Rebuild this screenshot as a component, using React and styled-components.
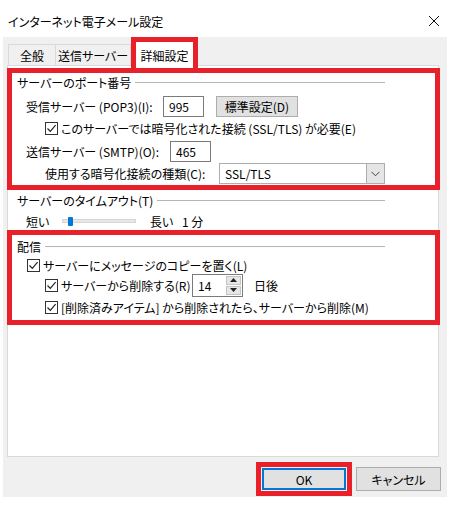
import styled, { createGlobalStyle } from "styled-components";

const GlobalStyle = createGlobalStyle`
  html, body {
    margin: 0;
    padding: 0;
    background: #ffffff;
  }
  body {
    font-family: "Noto Sans CJK JP", "Noto Sans", sans-serif;
    font-size: 12px;
    color: #000;
    font-feature-settings: "palt";
  }
  * {
    box-sizing: border-box;
  }
`;

const RED = "#e8202a";

const Window = styled.div`
  width: 458px;
  height: 506px;
  background: #fff;
  display: flex;
  flex-direction: column;
`;

const TitleBar = styled.div`
  height: 37px;
  padding: 5px 18px 0 8px;
  display: flex;
  align-items: center;
  justify-content: space-between;
  font-size: 12px;
`;

const CloseBtn = styled.div`
  width: 12px;
  height: 12px;
  display: flex;
  svg {
    display: block;
  }
`;

const Surface = styled.div`
  margin: 0 11px 0 3px;
  height: 460px;
  background: #f0f0f0;
  display: flex;
  flex-direction: column;
`;

const TabStrip = styled.div`
  height: 28px;
  padding-left: 5px;
  display: flex;
  align-items: flex-end;
`;

const Tab = styled.div`
  width: ${(p) => p.$w}px;
  height: 21px;
  border: 1px solid #d9d9d9;
  border-bottom: none;
  margin-right: -1px;
  background: #f0f0f0;
  display: flex;
  align-items: center;
  justify-content: center;
  white-space: nowrap;
`;

const ActiveTab = styled.div`
  width: ${(p) => p.$w}px;
  height: 31px;
  margin-bottom: -3px;
  margin-left: 1px;
  border: 5px solid ${RED};
  border-bottom: none;
  background: #fff;
  position: relative;
  z-index: 1;
  display: flex;
  align-items: center;
  justify-content: center;
  padding-top: 1px;
  white-space: nowrap;
`;

const Panel = styled.div`
  margin-left: 4px;
  width: 432px;
  height: 392px;
  border: 1px solid #d9d9d9;
  background: #fff;
  display: flex;
  flex-direction: column;
`;

const Highlight = styled.div`
  height: ${(p) => p.$h}px;
  margin: ${(p) => p.$mt}px -2px 0 -1px;
  border: 5px solid ${RED};
  display: flex;
  flex-direction: column;
`;

const GroupHeader = styled.div`
  height: 18px;
  margin-top: ${(p) => p.$mt || 0}px;
  padding-left: ${(p) => p.$pl}px;
  margin-right: ${(p) => p.$mr}px;
  display: flex;
  align-items: center;
  white-space: nowrap;
  &::after {
    content: "";
    flex: 1;
    height: 1px;
    margin-left: 4px;
    background: #b4b4b4;
  }
`;

const Row = styled.div`
  height: ${(p) => p.$h}px;
  margin-top: ${(p) => p.$mt || 0}px;
  padding-left: ${(p) => p.$pl}px;
  display: flex;
  align-items: center;
  white-space: nowrap;
`;

const Label = styled.span`
  width: ${(p) => (p.$w ? `${p.$w}px` : "auto")};
  margin-left: ${(p) => p.$ml || 0}px;
  flex-shrink: 0;
`;

const TextBox = styled.div`
  width: ${(p) => p.$w}px;
  height: 21px;
  border: 1px solid #7a7a7a;
  background: #fff;
  padding-left: 5px;
  display: flex;
  align-items: center;
`;

const PushButton = styled.div`
  width: ${(p) => p.$w}px;
  height: ${(p) => p.$h || 21}px;
  margin-left: ${(p) => p.$ml || 0}px;
  background: #e1e1e1;
  border: 1px solid ${(p) => (p.$focus ? "#0078d7" : "#adadad")};
  box-shadow: ${(p) => (p.$focus ? "inset 0 0 0 1px #0078d7" : "none")};
  display: flex;
  align-items: center;
  justify-content: center;
  white-space: nowrap;
`;

const Check = styled.span`
  width: 13px;
  height: 13px;
  margin-right: 3px;
  border: 1px solid #333;
  background: #fff;
  flex-shrink: 0;
  display: flex;
  align-items: center;
  justify-content: center;
`;

const Select = styled.div`
  width: 166px;
  height: 21px;
  border: 1px solid #adadad;
  background: #fff;
  display: flex;
  align-items: center;
  justify-content: space-between;
  padding-left: 5px;
`;

const SelectArrow = styled.div`
  width: 18px;
  height: 19px;
  background: #e5e5e5;
  border-left: 1px solid #adadad;
  display: flex;
  align-items: center;
  justify-content: center;
`;

const Track = styled.div`
  width: 74px;
  height: 4px;
  background: #e7e7e7;
  border: 1px solid #d6d6d6;
  display: flex;
  align-items: center;
`;

const Thumb = styled.div`
  width: 5px;
  height: 9px;
  margin-left: 5px;
  background: #0078d7;
  border-radius: 1px;
  flex-shrink: 0;
`;

const Spin = styled.div`
  width: 51px;
  height: 23px;
  border: 1px solid #7a7a7a;
  background: #fff;
  display: flex;
  align-items: center;
  justify-content: space-between;
  padding-left: 5px;
`;

const SpinButtons = styled.div`
  width: 15px;
  height: 19px;
  margin-right: 1px;
  display: flex;
  flex-direction: column;
  gap: 1px;
`;

const SpinBtn = styled.div`
  flex: 1;
  background: #e6e6e6;
  border: 1px solid #c4c4c4;
  display: flex;
  align-items: center;
  justify-content: center;
`;

const Footer = styled.div`
  margin-top: 5px;
  padding-right: 6px;
  display: flex;
  justify-content: flex-end;
  align-items: center;
  gap: 4px;
`;

const RedWrap = styled.div`
  border: 5px solid ${RED};
  padding: 1px;
  background: #f0f0f0;
`;

const Tick = () => (
  <svg width="11" height="11" viewBox="0 0 11 11">
    <path d="M1.5 5.5 L4.3 8.3 L9.6 2.2" fill="none" stroke="#222" strokeWidth="1.2" />
  </svg>
);

const CheckRow = ({ h, mt, pl, children }) => (
  <Row $h={h} $mt={mt} $pl={pl}>
    <Check>
      <Tick />
    </Check>
    {children}
  </Row>
);

export default function App() {
  return (
    <>
      <GlobalStyle />
      <Window>
        <TitleBar>
          <span>インターネット電子メール設定</span>
          <CloseBtn>
            <svg width="12" height="12" viewBox="0 0 12 12">
              <path d="M1 1 L11 11 M11 1 L1 11" stroke="#111" strokeWidth="1" />
            </svg>
          </CloseBtn>
        </TitleBar>
        <Surface>
          <TabStrip>
            <Tab $w={48}>全般</Tab>
            <Tab $w={76}>送信サーバー</Tab>
            <ActiveTab $w={67}>詳細設定</ActiveTab>
          </TabStrip>
          <Panel>
            <Highlight $h={122} $mt={2}>
              <GroupHeader $pl={5} $mr={50}>
                サーバーのポート番号
              </GroupHeader>
              <Row $h={22} $mt={4} $pl={14}>
                <Label $w={137}>受信サーバー (POP3)(I):</Label>
                <TextBox $w={41}>995</TextBox>
                <PushButton $w={82} $ml={12}>
                  標準設定(D)
                </PushButton>
              </Row>
              <CheckRow h={18} mt={2} pl={33}>
                このサーバーでは暗号化された接続 (SSL/TLS) が必要(E)
              </CheckRow>
              <Row $h={22} $mt={3} $pl={14}>
                <Label $w={144}>送信サーバー (SMTP)(O):</Label>
                <TextBox $w={41}>465</TextBox>
              </Row>
              <Row $h={21} $mt={1} $pl={33}>
                <Label $w={174}>使用する暗号化接続の種類(C):</Label>
                <Select>
                  SSL/TLS
                  <SelectArrow>
                    <svg width="9" height="6" viewBox="0 0 9 6">
                      <path d="M0.5 0.8 L4.5 4.8 L8.5 0.8" fill="none" stroke="#444" strokeWidth="1" />
                    </svg>
                  </SelectArrow>
                </Select>
              </Row>
            </Highlight>

            <GroupHeader $pl={9} $mr={53} $mt={1}>
              サーバーのタイムアウト(T)
            </GroupHeader>
            <Row $h={16} $mt={4} $pl={18}>
              <Label $w={36}>短い</Label>
              <Track>
                <Thumb />
              </Track>
              <Label $w={32} $ml={14}>長い</Label>
              <span>1 分</span>
            </Row>

            <Highlight $h={95} $mt={1}>
              <GroupHeader $pl={5} $mr={50} $mt={2}>
                配信
              </GroupHeader>
              <CheckRow h={17} mt={2} pl={15}>
                サーバーにメッセージのコピーを置く(L)
              </CheckRow>
              <Row $h={22} $pl={33}>
                <Check>
                  <Tick />
                </Check>
                <Label $w={131}>サーバーから削除する(R)</Label>
                <Spin>
                  14
                  <SpinButtons>
                    <SpinBtn>
                      <svg width="7" height="4" viewBox="0 0 7 4">
                        <path d="M0 4 L3.5 0 L7 4 Z" fill="#222" />
                      </svg>
                    </SpinBtn>
                    <SpinBtn>
                      <svg width="7" height="4" viewBox="0 0 7 4">
                        <path d="M0 0 L3.5 4 L7 0 Z" fill="#222" />
                      </svg>
                    </SpinBtn>
                  </SpinButtons>
                </Spin>
                <Label $ml={11}>日後</Label>
              </Row>
              <CheckRow h={18} mt={2} pl={33}>
                [削除済みアイテム] から削除されたら、サーバーから削除(M)
              </CheckRow>
            </Highlight>
          </Panel>
          <Footer>
            <RedWrap>
              <PushButton $w={84} $h={22} $focus>
                OK
              </PushButton>
            </RedWrap>
            <PushButton $w={85} $h={24}>
              キャンセル
            </PushButton>
          </Footer>
        </Surface>
      </Window>
    </>
  );
}
